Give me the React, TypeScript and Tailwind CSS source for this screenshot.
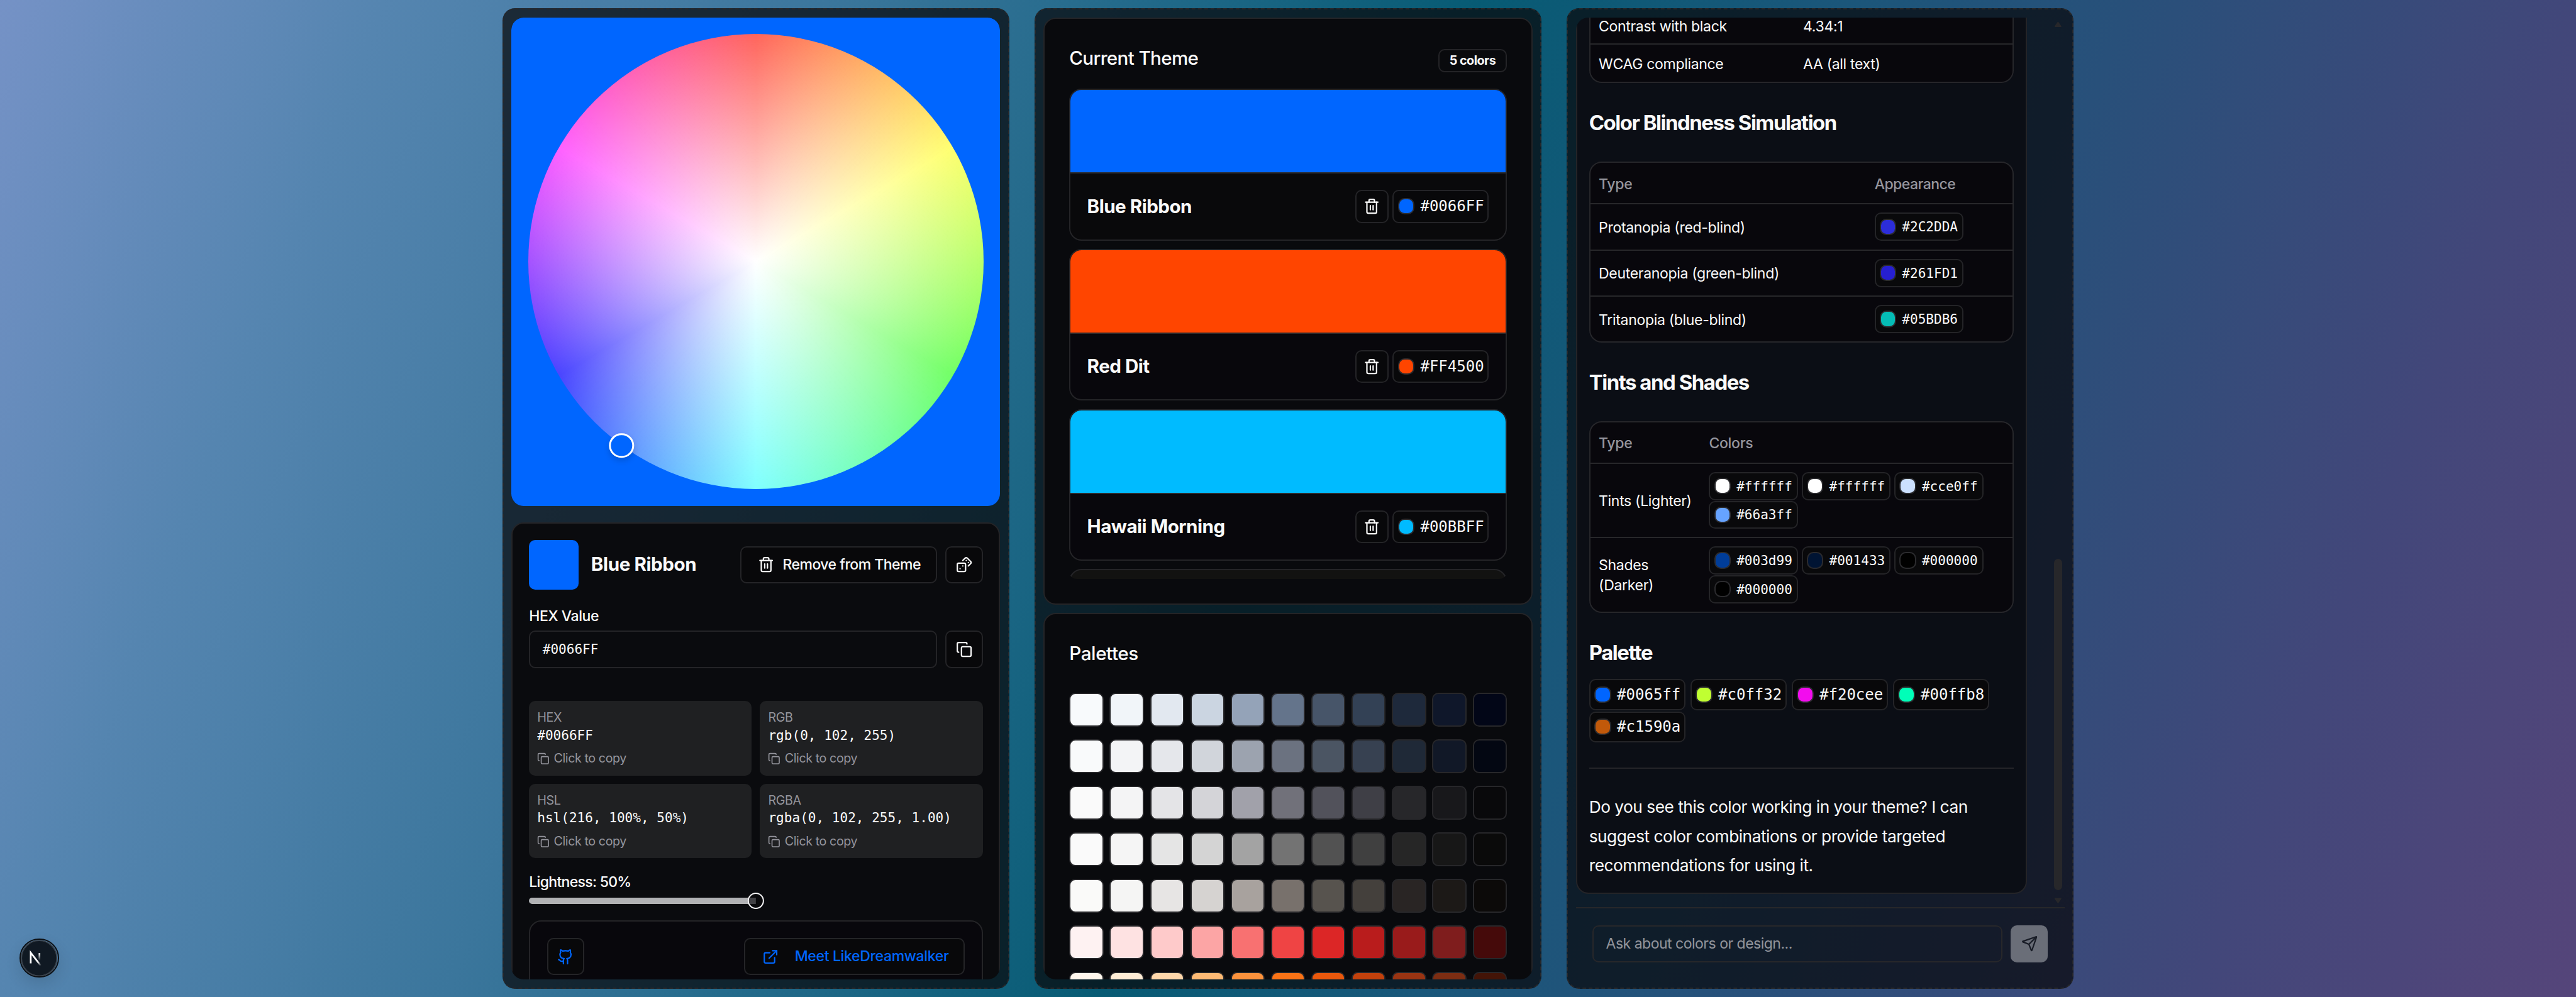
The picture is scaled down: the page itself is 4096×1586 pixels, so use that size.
import React from "react";
import { Trash2, Dices, Copy, Github, ExternalLink, Send } from "lucide-react";

const cardBorder = "border-2 border-[#242427]";

function Swatch({ color }: { color: string }) {
  return <span className={`size-4 shrink-0 rounded-[10.5px] border-2 border-[#2b2b2e] ${color}`} />;
}

function SmallChip({ color, hex }: { color: string; hex: string }) {
  return (
    <span className={`flex h-[44.8px] w-[141.6px] shrink-0 items-center rounded-[10px] bg-[#09090b] pl-[6.2px] ${cardBorder}`}>
      <Swatch color={color} />
      <span className="ml-[9.2px] font-[DejaVu_Sans_Mono,monospace] text-[21.05px] leading-none tracking-normal whitespace-nowrap">{hex}</span>
    </span>
  );
}

function LargeChip({ color, hex, height }: { color: string; hex: string; height: string }) {
  return (
    <span className={`flex w-[153.4px] shrink-0 items-center rounded-[10px] bg-[#08080a] pl-[6.6px] ${height} ${cardBorder}`}>
      <Swatch color={color} />
      <span className="ml-[9.5px] font-[DejaVu_Sans_Mono,monospace] text-[24px] leading-none whitespace-nowrap">{hex}</span>
    </span>
  );
}

function IconButton({ children, className }: { children: React.ReactNode; className: string }) {
  return (
    <button className={`flex shrink-0 items-center justify-center rounded-[10px] bg-[#08080a] ${cardBorder} ${className}`}>
      {children}
    </button>
  );
}

function ValueTile({ label, value }: { label: string; value: string }) {
  return (
    <div className="flex h-[118.4px] flex-col rounded-[10px] bg-[#1f2022] px-[13px] pt-[13.2px]">
      <div className="h-[26.3px] text-[19.73px] leading-[26.3px] tracking-[-0.02em] text-[#95959d]">{label}</div>
      <div className="h-[32.9px] font-[DejaVu_Sans_Mono,monospace] text-[21.05px] leading-[30px] whitespace-pre">{value}</div>
      <div className="mt-[6.6px] flex h-[26.3px] items-center gap-[6.6px] text-[19.73px] leading-none tracking-[-0.022em] text-[#95959d]">
        <Copy className="size-[19.7px]" />
        Click to copy
      </div>
    </div>
  );
}

const theme = [
  { name: "Blue Ribbon", hex: "#0066FF", color: "bg-[#0066ff]", body: "bg-[#09090b]" },
  { name: "Red Dit", hex: "#FF4500", color: "bg-[#ff4500]", body: "bg-[#08070c]" },
  { name: "Hawaii Morning", hex: "#00BBFF", color: "bg-[#00bbff]", body: "bg-[#08070c]" },
];

const palettes = [
  ["bg-[#f8fafc]", "bg-[#f1f5f9]", "bg-[#e2e8f0]", "bg-[#cbd5e1]", "bg-[#94a3b8]", "bg-[#64748b]", "bg-[#475569]", "bg-[#334155]", "bg-[#1e293b]", "bg-[#0f172a]", "bg-[#020617]"],
  ["bg-[#f9fafb]", "bg-[#f3f4f6]", "bg-[#e5e7eb]", "bg-[#d1d5db]", "bg-[#9ca3af]", "bg-[#6b7280]", "bg-[#4b5563]", "bg-[#374151]", "bg-[#1f2937]", "bg-[#111827]", "bg-[#030712]"],
  ["bg-[#fafafa]", "bg-[#f4f4f5]", "bg-[#e4e4e7]", "bg-[#d4d4d8]", "bg-[#a1a1aa]", "bg-[#71717a]", "bg-[#52525b]", "bg-[#3f3f46]", "bg-[#27272a]", "bg-[#18181b]", "bg-[#09090b]"],
  ["bg-[#fafafa]", "bg-[#f5f5f5]", "bg-[#e5e5e5]", "bg-[#d4d4d4]", "bg-[#a3a3a3]", "bg-[#737373]", "bg-[#525252]", "bg-[#404040]", "bg-[#262626]", "bg-[#171717]", "bg-[#0a0a0a]"],
  ["bg-[#fafaf9]", "bg-[#f5f5f4]", "bg-[#e7e5e4]", "bg-[#d6d3d1]", "bg-[#a8a29e]", "bg-[#78716c]", "bg-[#57534e]", "bg-[#44403c]", "bg-[#292524]", "bg-[#1c1917]", "bg-[#0c0a09]"],
  ["bg-[#fef2f2]", "bg-[#fee2e2]", "bg-[#fecaca]", "bg-[#fca5a5]", "bg-[#f87171]", "bg-[#ef4444]", "bg-[#dc2626]", "bg-[#b91c1c]", "bg-[#991b1b]", "bg-[#7f1d1d]", "bg-[#450a0a]"],
  ["bg-[#fff7ed]", "bg-[#ffedd5]", "bg-[#fed7aa]", "bg-[#fdba74]", "bg-[#fb923c]", "bg-[#f97316]", "bg-[#ea580c]", "bg-[#c2410c]", "bg-[#9a3412]", "bg-[#7c2d12]", "bg-[#431407]"],
];

const simulations = [
  { name: "Protanopia (red-blind)", hex: "#2C2DDA", color: "bg-[#2c2dda]", row: "h-[73.3px] border-b-2" },
  { name: "Deuteranopia (green-blind)", hex: "#261FD1", color: "bg-[#261fd1]", row: "h-[73.3px] border-b-2" },
  { name: "Tritanopia (blue-blind)", hex: "#05BDB6", color: "bg-[#05bdb6]", row: "h-[71.3px]" },
];

const tints = [
  { hex: "#ffffff", color: "bg-white" },
  { hex: "#ffffff", color: "bg-white" },
  { hex: "#cce0ff", color: "bg-[#cce0ff]" },
  { hex: "#66a3ff", color: "bg-[#66a3ff]" },
];

const shades = [
  { hex: "#003d99", color: "bg-[#003d99]" },
  { hex: "#001433", color: "bg-[#001433]" },
  { hex: "#000000", color: "bg-black" },
  { hex: "#000000", color: "bg-black" },
];

const accents = [
  { hex: "#0065ff", color: "bg-[#0065ff]" },
  { hex: "#c0ff32", color: "bg-[#c0ff32]" },
  { hex: "#f20cee", color: "bg-[#f20cee]" },
  { hex: "#00ffb8", color: "bg-[#00ffb8]" },
  { hex: "#c1590a", color: "bg-[#c1590a]" },
];

function Panel({ children }: { children: React.ReactNode }) {
  return (
    <section className="flex min-w-0 flex-1 flex-col rounded-[19.7px] border-2 border-dashed border-[#27272a] bg-[#09090b]/72 p-[12.8px]">
      {children}
    </section>
  );
}

function PickerPanel() {
  return (
    <Panel>
      <div className="flex h-full flex-col gap-4 overflow-hidden rounded-[19.7px]">
        <div className="relative h-[776.6px] w-full shrink-0 rounded-[19.7px] bg-[#0066ff] p-4">
          <div className="size-full rounded-full bg-[radial-gradient(circle_closest-side,#fff,rgba(255,255,255,0)),conic-gradient(#ff655c_0deg,#ffff70_60deg,#72ff66_120deg,#80ffff_180deg,#4a45ff_240deg,#ff60ff_300deg,#ff655c_360deg)]" />
          <span className="absolute top-[87.7%] left-[22.5%] size-[39.4px] -translate-1/2 rounded-full border-[3.3px] border-white bg-[#0066ff] shadow-[0_5px_10px_rgba(0,0,0,0.15)]" />
        </div>

        <div className={`h-[900px] shrink-0 rounded-t-[19.7px] bg-[#0a0b0e] p-[25.9px] ${cardBorder}`}>
          <div className="flex items-center">
            <span className="size-12 shrink-0 rounded-[10px] bg-[#0066ff]" />
            <h2 className="ml-3 flex-1 text-[29.6px] leading-none font-bold tracking-[-0.014em] whitespace-nowrap">Blue Ribbon</h2>
            <button className={`flex h-9 w-[313.4px] items-center gap-[13px] rounded-[10px] bg-[#08080a] pl-[26.3px] text-[23.02px] leading-none font-medium tracking-[-0.023em] whitespace-nowrap ${cardBorder}`}>
              <Trash2 className="size-4" />
              Remove from Theme
            </button>
            <IconButton className="ml-2 size-9">
              <Dices className="size-4" />
            </IconButton>
          </div>

          <div className="mt-4 h-5 text-[23.02px] leading-5 font-medium tracking-[-0.018em]">HEX Value</div>
          <div className="mt-1 flex gap-2">
            <div className={`flex h-9 flex-1 items-center rounded-[10px] pl-[19.5px] font-[DejaVu_Sans_Mono,monospace] text-[21.05px] leading-none ${cardBorder}`}>
              #0066FF
            </div>
            <IconButton className="size-9">
              <Copy className="size-4" />
            </IconButton>
          </div>

          <div className="mt-8 grid grid-cols-2 gap-2">
            <ValueTile label="HEX" value="#0066FF" />
            <ValueTile label="RGB" value="rgb(0, 102, 255)" />
            <ValueTile label="HSL" value="hsl(216, 100%, 50%)" />
            <ValueTile label="RGBA" value="rgba(0, 102, 255, 1.00)" />
          </div>

          <div className="mt-[27px] text-[23.02px] leading-[23px] font-medium tracking-[-0.03em]">Lightness: 50%</div>
          <div className="relative mt-[5px] flex h-4 items-center">
            <span className="h-[9.9px] w-1/2 rounded-l-full bg-[#b1b2b4]" />
            <span className="absolute top-0 left-1/2 flex size-4 -translate-x-1/2 items-center overflow-hidden rounded-full border-2 border-[#f4f4f5] bg-[#09090b]">
              <span className="h-[9.9px] w-1/2 bg-[#414144]" />
            </span>
          </div>

          <div className={`mt-[17.5px] flex h-[300px] items-start justify-between rounded-t-[19.7px] bg-[#08070c] p-[26.3px] ${cardBorder}`}>
            <IconButton className="size-9 text-[#0066ff]">
              <Github className="size-4" />
            </IconButton>
            <button className={`flex h-9 w-[351px] items-center gap-[25.8px] rounded-[10px] bg-[#08080a] pl-[26.3px] text-[23.02px] leading-none font-medium tracking-[-0.015em] whitespace-nowrap text-[#0066ff] ${cardBorder}`}>
              <ExternalLink className="size-4" />
              Meet LikeDreamwalker
            </button>
          </div>
        </div>
      </div>
    </Panel>
  );
}

function ThemePanel() {
  return (
    <Panel>
      <div className="flex h-full flex-col gap-2 overflow-hidden rounded-[19.7px]">
        <div className={`flex h-[934.2px] shrink-0 flex-col rounded-[19.7px] bg-[#090a0d] px-[38.8px] pt-[38.8px] ${cardBorder}`}>
          <div className="mb-4 flex h-[46px] shrink-0 items-end justify-between">
            <h2 className="text-[29.6px] leading-[46px] font-medium tracking-[-0.022em]">Current Theme</h2>
            <span className={`flex h-[36.3px] w-[108.6px] items-center justify-center rounded-[10px] text-[19.73px] leading-none font-bold tracking-[-0.025em] ${cardBorder}`}>
              5 colors
            </span>
          </div>
          <div className="flex h-[780px] flex-col gap-2 overflow-hidden rounded-b-[12px]">
            {theme.map((item) => (
              <div key={item.name} className={`flex h-[241.6px] shrink-0 flex-col overflow-hidden rounded-[19.7px] ${item.body} ${cardBorder}`}>
                <div className={`h-[133px] shrink-0 border-b-2 border-[#2b2b2e] ${item.color}`} />
                <div className="flex flex-1 items-center gap-1 px-4">
                  <span className="flex-1 text-[29.6px] leading-none font-bold tracking-[-0.017em]">{item.name}</span>
                  <IconButton className="size-8">
                    <Trash2 className="size-4" />
                  </IconButton>
                  <LargeChip color={item.color} hex={item.hex} height="h-8" />
                </div>
              </div>
            ))}
            <div className={`h-[241.6px] shrink-0 rounded-[19.7px] bg-[#121211] ${cardBorder}`} />
          </div>
        </div>

        <div className={`h-[700px] shrink-0 rounded-[19.7px] bg-[#090a0d] p-[38.8px] ${cardBorder}`}>
          <h2 className="mb-6 h-[46px] text-[29.6px] leading-[46px] font-medium tracking-[-0.014em]">Palettes</h2>
          <div className="flex flex-col gap-[19.9px]">
            {palettes.map((row, i) => (
              <div key={i} className="grid grid-cols-11 gap-[9.9px]">
                {row.map((c, j) => (
                  <span key={j} className={`aspect-square rounded-[10px] border-2 border-[#27272a] ${c}`} />
                ))}
              </div>
            ))}
          </div>
        </div>
      </div>
    </Panel>
  );
}

function ScrollArrow({ down }: { down?: boolean }) {
  return (
    <svg viewBox="0 0 12 9" className={down ? "h-[9.5px] w-[12.7px] rotate-180" : "h-[9.5px] w-[12.7px]"}>
      <path d="M5.2 1.2 Q6 0 6.8 1.2 L11 7 Q11.6 8.6 10.4 8.6 H1.6 Q.4 8.6 1 7 Z" fill="#27272a" />
    </svg>
  );
}

const tableBox = "overflow-hidden rounded-[19.7px] border-2 border-[#26262a] bg-[#08070c] text-[23.02px] tracking-[-0.014em]";
const heading = "text-[32.9px] leading-[47px] h-[46px] font-bold tracking-[-0.044em]";

function ChatPanel() {
  return (
    <Panel>
      <div className="flex h-[1415.5px] shrink-0 justify-between overflow-hidden rounded-tl-[19.7px] pr-[3.5px]">
        <div className="flex h-full w-[717.8px] flex-col justify-end pb-[21.5px]">
          <article className="shrink-0 rounded-b-[19.7px] border-2 border-[#242428] bg-[#0b0e15] px-[19.1px] pb-[19.7px]">
            <div className={`rounded-t-none border-t-0 ${tableBox}`}>
              <div className="flex h-[60.8px] items-center border-b-2 border-[#27272a] px-[13.4px] pt-[5px] leading-none">
                <span className="w-[325px]">Contrast with black</span>
                <span>4.34:1</span>
              </div>
              <div className="flex h-[58.6px] items-center px-[13.4px] pt-[4px] leading-none">
                <span className="w-[325px]">WCAG compliance</span>
                <span>AA (all text)</span>
              </div>
            </div>

            <h2 className={`mt-[40.5px] ${heading}`}>Color Blindness Simulation</h2>
            <div className={`mt-[39px] ${tableBox}`}>
              <div className="flex h-[66.2px] items-center border-b-2 border-[#27272a] px-[13.4px] pt-[4px] font-medium text-[#95959d]">
                <span className="w-[438.6px]">Type</span>
                <span className="tracking-[-0.024em]">Appearance</span>
              </div>
              {simulations.map((s) => (
                <div key={s.hex} className={`flex items-center border-[#27272a] px-[13.4px] ${s.row}`}>
                  <span className="w-[438.6px] pt-[3px]">{s.name}</span>
                  <SmallChip color={s.color} hex={s.hex} />
                </div>
              ))}
            </div>

            <h2 className={`mt-[39.5px] ${heading}`}>Tints and Shades</h2>
            <div className={`mt-[39.2px] ${tableBox}`}>
              <div className="flex h-[66.2px] items-center border-b-2 border-[#27272a] px-[13.4px] pt-[3px] font-medium text-[#95959d]">
                <span className="w-[175.4px]">Type</span>
                <span>Colors</span>
              </div>
              <div className="flex h-[118.3px] items-center border-b-2 border-[#27272a] pr-0 pl-[13.4px]">
                <span className="w-[175.4px] shrink-0 pt-[2px]">Tints (Lighter)</span>
                <div className="flex flex-1 flex-wrap gap-x-[5.8px] gap-y-[0.8px]">
                  {tints.map((c, i) => (
                    <SmallChip key={i} color={c.color} hex={c.hex} />
                  ))}
                </div>
              </div>
              <div className="flex h-[116.3px] items-center pl-[13.4px]">
                <span className="w-[175.4px] shrink-0 pt-[2px] leading-[32.9px]">
                  Shades
                  <br />
                  (Darker)
                </span>
                <div className="flex flex-1 flex-wrap gap-x-[5.8px] gap-y-[0.8px]">
                  {shades.map((c, i) => (
                    <SmallChip key={i} color={c.color} hex={c.hex} />
                  ))}
                </div>
              </div>
            </div>

            <h2 className={`mt-[40px] ${heading}`}>Palette</h2>
            <div className="mt-[19.7px] flex flex-wrap gap-x-[7.6px] gap-y-[2px]">
              {accents.map((c) => (
                <LargeChip key={c.hex} color={c.color} hex={c.hex} height="h-[49.3px]" />
              ))}
            </div>

            <hr className="mt-[40.5px] border-0 border-t-2 border-[#242428]" />
            <p className="mt-[38px] text-[26.3px] leading-[46.3px] tracking-[-0.019em] whitespace-nowrap">
              Do you see this color working in your theme? I can
              <br />
              suggest color combinations or provide targeted
              <br />
              recommendations for using it.
            </p>
          </article>
        </div>

        <div className="flex flex-col items-center pt-[6.5px] pb-[6.3px]">
          <ScrollArrow />
          <span className="mt-auto mb-[12px] h-[526.5px] w-[12.7px] rounded-full bg-[#27272a]" />
          <ScrollArrow down />
        </div>
      </div>

      <div className="flex gap-2 border-t-2 border-[#27272a] p-4">
        <div className="flex h-9 flex-1 items-center rounded-[10px] border-2 border-[#27272a] pl-[19.7px] text-[23.02px] leading-none tracking-[-0.022em] text-[#93959c]">
          Ask about colors or design...
        </div>
        <button className="flex size-9 items-center justify-center rounded-[10px] bg-[#6a6e78]">
          <Send className="size-4 text-[#181c26]" />
        </button>
      </div>
    </Panel>
  );
}

function DevBadge() {
  return (
    <div className="absolute bottom-[31px] left-[31px] size-[62.5px] rounded-full border-2 border-[#0c0f13] shadow-[0_10px_24px_rgba(0,0,0,0.12)]">
      <svg viewBox="0 0 40 40" className="size-full" fill="none">
        <defs>
          <linearGradient id="diag" x1="9.96" y1="11.12" x2="15.48" y2="17.97" gradientUnits="userSpaceOnUse">
            <stop stopColor="white" />
            <stop offset="0.604" stopColor="white" stopOpacity="0" />
            <stop offset="1" stopColor="white" stopOpacity="0" />
          </linearGradient>
          <linearGradient id="stem" x1="11.82" y1="1.4" x2="11.79" y2="9.63" gradientUnits="userSpaceOnUse">
            <stop stopColor="white" />
            <stop offset="1" stopColor="white" stopOpacity="0" />
          </linearGradient>
        </defs>
        <circle cx="20" cy="20" r="19.2" fill="#101923" stroke="#3a4149" strokeWidth="1.3" />
        <g transform="translate(8.5 13)">
          <path d="M13.3 15.2 L2.34 1 V12.6" stroke="url(#diag)" strokeWidth="1.86" />
          <path d="M11.825 1.5 V13.1" stroke="url(#stem)" strokeWidth="1.86" />
        </g>
      </svg>
    </div>
  );
}

export default function App() {
  return (
    <main className="relative flex h-[1586px] w-[4096px] justify-center overflow-hidden bg-[linear-gradient(111deg,#7592c6_0%,#5585b0_13%,#3b769c_28%,#216989_39%,#075b74_50%,#19577a_61%,#28507a_72%,#42477a_87%,#55457a_100%)] font-[Inter,sans-serif] text-[#fafafa] [--spacing:6.576px]">
      <div className="flex h-full w-[2525.2px] gap-6 p-2">
        <PickerPanel />
        <ThemePanel />
        <ChatPanel />
      </div>
      <DevBadge />
    </main>
  );
}
